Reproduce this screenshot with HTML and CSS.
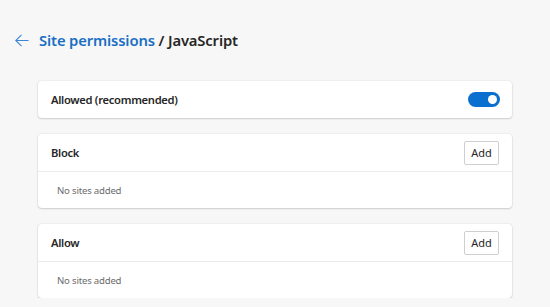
FILE: index.html
```html
<!DOCTYPE html>
<html>
<head>
<meta charset="utf-8">
<link rel="stylesheet" href="styles.css">
</head>
<body>
<div class="header">
  <svg class="back" width="14" height="13" viewBox="0 0 14 13"><path d="M6.5 0.8 L0.8 6.5 L6.5 12.2 M0.8 6.5 H13.5" fill="none" stroke="#3d86d3" stroke-width="1.1"/></svg>
  <h1 class="title"><span class="crumb">Site permissions</span> / JavaScript</h1>
</div>
<div class="content">
  <div class="card row">
    <span class="label">Allowed (recommended)</span>
    <span class="toggle"><span class="knob"></span></span>
  </div>
  <div class="card">
    <div class="row head">
      <span class="label">Block</span>
      <button class="add">Add</button>
    </div>
    <div class="empty">No sites added</div>
  </div>
  <div class="card">
    <div class="row head">
      <span class="label">Allow</span>
      <button class="add">Add</button>
    </div>
    <div class="empty">No sites added</div>
  </div>
</div>
</body>
</html>
```
FILE: styles.css
```css
html, body {
  margin: 0;
  background: #f7f7f7;
  font-family: "Noto Sans", "Open Sans", sans-serif;
  color: #1f1f1f;
}
.header {
  display: flex;
  align-items: center;
  height: 24px;
  padding: 28px 0 0 15px;
}
.back { margin-right: 10px; }
.title {
  margin: 0;
  font-size: 14.8px;
  font-weight: 600;
  color: #262626;
  letter-spacing: -0.15px;
}
.crumb { color: #1a6fc4; }
.content {
  margin: 29px 0 0 38px;
  width: 474px;
  display: flex;
  flex-direction: column;
  gap: 16px;
}
.card {
  background: #fff;
  border-radius: 4px;
  box-shadow: 0 0 2px rgba(0,0,0,0.12), 0 1px 2px rgba(0,0,0,0.14);
}
.row {
  display: flex;
  align-items: center;
  justify-content: space-between;
  height: 37px;
  padding: 0 12px 0 13px;
}
.head { border-bottom: 1px solid #ebebeb; }
.label {
  font-size: 11.2px;
  font-weight: 600;
  color: #262626;
  letter-spacing: -0.3px;
}
.toggle {
  width: 32px;
  height: 15px;
  border-radius: 8px;
  background: #0b6fd0;
  display: flex;
  align-items: center;
  justify-content: flex-end;
  padding-right: 3px;
  box-sizing: border-box;
}
.knob {
  width: 9px;
  height: 9px;
  border-radius: 50%;
  background: #fff;
}
.add {
  width: 35px;
  height: 24px;
  border: 1px solid #cfcfcf;
  border-radius: 2px;
  background: #fff;
  font-family: "Noto Sans", "Open Sans", sans-serif;
  font-size: 11px;
  color: #262626;
  padding: 0;
  margin-right: 1px;
}
.empty {
  height: 36px;
  display: flex;
  align-items: center;
  padding-left: 19px;
  font-size: 9.6px;
  color: #6b6b6b;
  letter-spacing: -0.2px;
}
```
